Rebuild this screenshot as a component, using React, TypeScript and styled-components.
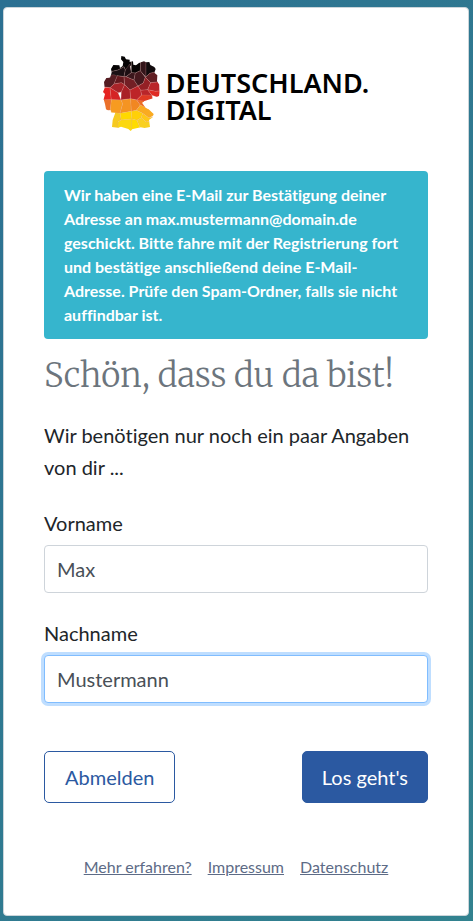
import React, { useState } from "react";
import styled, { createGlobalStyle } from "styled-components";

const GlobalStyle = createGlobalStyle`
  *, *::before, *::after { box-sizing: border-box; }
  body {
    margin: 0;
    font-family: Lato, "Open Sans", sans-serif;
    font-size: 20px;
    line-height: 32px;
    font-variant-ligatures: none;
    color: #212529;
    background: #2f7990;
  }
`;

const Page = styled.div`
  display: flex;
  min-height: 100vh;
  padding: 7px 4px 5px 3px;
  background: linear-gradient(125deg, #2c7092, #32828f);
`;

const Card = styled.main`
  flex: 1;
  min-width: 0;
  padding: 48px 40px 32px;
  border: 1px solid #cbd5da;
  border-radius: 4px;
  background: #fff;
`;

const Brand = styled.header`
  display: flex;
  justify-content: center;
  align-items: center;
  gap: 6px;
  margin-bottom: 40px;
`;

const BrandName = styled.div`
  padding-top: 4px;
  font-family: "Noto Sans", sans-serif;
  font-size: 27px;
  font-weight: 600;
  line-height: 27px;
  color: #000;
`;

const Notice = styled.div`
  padding: 12px 20px;
  border-radius: 4px;
  background: #36b5cd;
  color: #fff;
  font-size: 16px;
  font-weight: 700;
  line-height: 24px;
`;

const Title = styled.h1`
  margin: 16px 0 23px;
  font-family: Merriweather, "Noto Serif", "DejaVu Serif", serif;
  font-size: 33px;
  font-weight: 300;
  line-height: 41px;
  color: #6c757d;
  white-space: nowrap;
`;

const Intro = styled.p`
  margin: 0 0 24px;
`;

const Field = styled.div`
  display: flex;
  flex-direction: column;
  gap: 6px;
  margin-bottom: 24px;
`;

const Input = styled.input<{ $highlighted: boolean }>`
  width: 100%;
  height: 48px;
  padding: 6px 12px;
  border: 1px solid ${(p) => (p.$highlighted ? "#80bdff" : "#ced4da")};
  border-radius: 4px;
  outline: none;
  box-shadow: ${(p) => (p.$highlighted ? "0 0 0 3px #bfdeff" : "none")};
  background: #fff;
  color: #495057;
  font: inherit;
`;

const Actions = styled.div`
  display: flex;
  justify-content: space-between;
  margin: 48px 0;
`;

const Button = styled.button<{ $primary?: boolean }>`
  height: 52px;
  padding: 0 ${(p) => (p.$primary ? 19 : 20)}px;
  border: 1px solid #2b59a1;
  border-radius: 5px;
  background: ${(p) => (p.$primary ? "#2b59a1" : "#fff")};
  color: ${(p) => (p.$primary ? "#fff" : "#2b59a1")};
  font: inherit;
  cursor: pointer;
`;

const FooterNav = styled.nav`
  display: flex;
  flex-wrap: wrap;
  justify-content: center;
  gap: 16px;
`;

const FooterLink = styled.a`
  font-size: 16px;
  color: #5d6b86;
  text-decoration: underline;
`;

const outline =
  "M76 18 L86 20 L90 28 L101 29 L101 36 L111 34 L112 44 L120 46 L130 38 L144 34 L150 37 L160 36 L163 45 L175 51 L179 57 L175 68 L184 76 L183 94 L190 104 L191 128 L189 138 L174 144 L145 153 L138 158 L149 174 L158 178 L173 192 L170 202 L159 210 L162 231 L146 234 L134 232 L108 238 L104 243 L97 237 L75 230 L66 233 L48 231 L50 210 L58 188 L45 187 L30 178 L27 162 L23 148 L27 132 L21 126 L26 114 L24 96 L31 84 L43 83 L47 67 L45 57 L52 45 L70 46 L72 54 L80 48 L82 36 L75 28 Z";

const cells: [string, string][] = [
  ["M70 10 L105 25 L106 46 L88 60 L84 50 L66 60 L40 66 L43 45Z", "#050304"],
  ["M40 66 L66 60 L84 50 L88 60 L84 80 L64 77 L38 90Z", "#1b1014"],
  ["M88 60 L101 42 L106 68 L90 80 L84 80Z", "#1c0e12"],
  ["M106 30 L134 38 L133 62 L118 69 L106 68Z", "#070404"],
  ["M134 20 L150 28 L150 82 L133 63Z", "#35151a"],
  ["M150 28 L162 30 L190 50 L180 66 L162 70 L150 80Z", "#120b0d"],
  ["M90 80 L106 68 L118 69 L114 90 L104 86Z", "#3a171c"],
  ["M15 80 L54 74 L64 79 L54 102 L42 113 L20 110Z", "#551c22"],
  ["M64 77 L84 80 L86 104 L76 98 L54 102Z", "#64191e"],
  ["M84 80 L90 80 L104 86 L114 90 L126 108 L119 112 L102 120 L86 104Z", "#731f25"],
  ["M118 69 L133 62 L148 82 L142 99 L126 108 L114 90Z", "#45191e"],
  ["M148 82 L162 70 L190 62 L188 96 L164 98Z", "#611e23"],
  ["M148 82 L164 98 L155 119 L134 121 L126 108 L142 99Z", "#942025"],
  ["M164 98 L200 94 L200 122 L178 124 L155 119Z", "#ba2529"],
  ["M42 113 L54 102 L76 98 L86 104 L76 126 L66 128Z", "#a82429"],
  ["M86 104 L102 120 L104 146 L75 150 L76 126Z", "#a92126"],
  ["M102 120 L126 108 L134 121 L137 135 L122 150 L104 146Z", "#bd2428"],
  ["M134 121 L155 119 L168 136 L151 151 L140 148Z", "#b92529"],
  ["M155 119 L178 124 L200 122 L198 146 L168 136Z", "#df2b24"],
  ["M15 111 L42 113 L46 149 L20 150Z", "#e52422"],
  ["M42 113 L66 128 L75 150 L46 149Z", "#d52425"],
  ["M122 150 L137 135 L168 136 L170 150 L142 159Z", "#df3a23"],
  ["M15 149 L46 149 L43 180 L25 182Z", "#eb702a"],
  ["M46 149 L75 150 L80 161 L72 190 L47 190 L43 178Z", "#f79b20"],
  ["M75 150 L104 146 L106 184 L72 190 L80 161Z", "#f59422"],
  ["M104 146 L122 150 L133 165 L121 181 L106 184Z", "#f18722"],
  ["M122 150 L145 153 L153 176 L133 165Z", "#ed6d25"],
  ["M133 165 L158 176 L180 192 L159 204 L140 190 L121 181Z", "#faab20"],
  ["M40 186 L72 190 L76 210 L66 215 L68 240 L40 240Z", "#f6ca20"],
  ["M72 190 L106 184 L108 207 L76 210Z", "#ffd900"],
  ["M106 184 L121 181 L140 190 L136 203 L123 211 L108 207Z", "#ffd008"],
  ["M140 190 L159 204 L180 198 L170 212 L151 216 L136 203Z", "#ffc817"],
  ["M66 215 L76 210 L108 207 L108 250 L66 240Z", "#fcd80f"],
  ["M108 207 L123 211 L134 238 L106 250Z", "#ffdc00"],
  ["M123 211 L136 203 L151 216 L170 212 L170 240 L134 238Z", "#f9d021"],
];

function MapLogo() {
  return (
    <svg width="57" height="75" viewBox="21 18 171 225" aria-hidden="true">
      <clipPath id="country">
        <path d={outline} />
      </clipPath>
      <g clipPath="url(#country)" stroke="#dfa6a0" strokeOpacity="0.4" strokeWidth="1.5">
        {cells.map(([d, fill]) => (
          <path key={d} d={d} fill={fill} />
        ))}
      </g>
    </svg>
  );
}

export default function App() {
  const [firstName, setFirstName] = useState("Max");
  const [lastName, setLastName] = useState("Mustermann");
  const [active, setActive] = useState("lastName");

  return (
    <>
      <GlobalStyle />
      <Page>
        <Card>
          <Brand>
            <MapLogo />
            <BrandName>
              DEUTSCHLAND.
              <br />
              DIGITAL
            </BrandName>
          </Brand>
          <Notice role="status">
            Wir haben eine E-Mail zur Bestätigung deiner Adresse an
            max.mustermann@domain.de geschickt. Bitte fahre mit der
            Registrierung fort und bestätige anschließend deine E-Mail-Adresse.
            Prüfe den Spam-Ordner, falls sie nicht auffindbar ist.
          </Notice>
          <Title>Schön, dass du da bist!</Title>
          <Intro>Wir benötigen nur noch ein paar Angaben von dir ...</Intro>
          <form onSubmit={(e) => e.preventDefault()}>
            <Field>
              <label htmlFor="firstName">Vorname</label>
              <Input
                id="firstName"
                value={firstName}
                $highlighted={active === "firstName"}
                onFocus={() => setActive("firstName")}
                onChange={(e) => setFirstName(e.target.value)}
              />
            </Field>
            <Field>
              <label htmlFor="lastName">Nachname</label>
              <Input
                id="lastName"
                value={lastName}
                $highlighted={active === "lastName"}
                onFocus={() => setActive("lastName")}
                onChange={(e) => setLastName(e.target.value)}
              />
            </Field>
            <Actions>
              <Button type="button">Abmelden</Button>
              <Button type="submit" $primary>
                Los geht's
              </Button>
            </Actions>
          </form>
          <FooterNav>
            <FooterLink href="#mehr">Mehr erfahren?</FooterLink>
            <FooterLink href="#impressum">Impressum</FooterLink>
            <FooterLink href="#datenschutz">Datenschutz</FooterLink>
          </FooterNav>
        </Card>
      </Page>
    </>
  );
}
